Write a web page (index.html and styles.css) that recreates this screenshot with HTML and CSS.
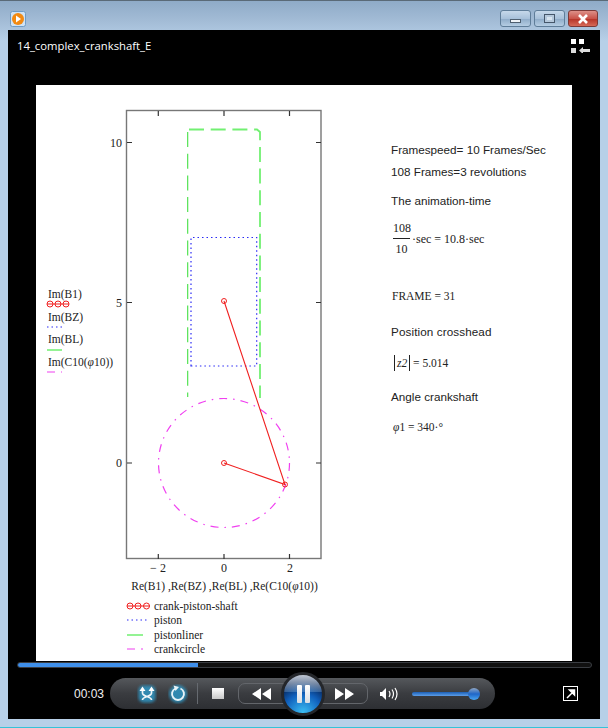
FILE: index.html
```html
<!DOCTYPE html>
<html lang="en">
<head>
<meta charset="utf-8">
<title>14_complex_crankshaft_E</title>
<link rel="stylesheet" href="styles.css">
</head>
<body>
<div class="window">
  <div class="titlebar">
    <svg class="appicon" width="16" height="16" viewBox="0 0 16 16">
      <rect x=".5" y=".5" width="15" height="15" rx="2" fill="#cfe3f5" stroke="#6f9cc6"/>
      <circle cx="8" cy="8" r="6" fill="#f28a12"/>
      <path d="M6 4.500 11 8 6 11.500Z" fill="#fff"/>
    </svg>
    <div class="winbtns">
      <div class="winbtn"><span class="glyph-min"></span></div>
      <div class="winbtn"><span class="glyph-max"></span></div>
      <div class="winbtn close">
        <svg width="12" height="10" viewBox="0 0 12 10"><path d="M2 1 10 9M10 1 2 9" stroke="#fff" stroke-width="2.600"/></svg>
      </div>
    </div>
  </div>
  <div class="player">
    <div class="header">
      <span class="filename">14_complex_crankshaft_E</span>
      <svg class="layout-icon" width="19" height="14" viewBox="0 0 19 14">
        <path d="M0 0h5v5H0zM8 0h5v5H8z" fill="#fff"/>
        <path d="M0 9h5v5H0z" fill="#ddd"/>
        <path d="M8 11.500l4-3.500v2h7v3h-7v2z" fill="#ddd"/>
      </svg>
    </div>
    <div class="stage">
      <svg class="plot" width="340" height="576" viewBox="36 85 340 576">
        <rect x="126.500" y="110.500" width="194.500" height="448" fill="none" stroke="#777" stroke-width="1.400"/>
        <g stroke="#333" stroke-width="1.200">
          <path d="M158.300 111v5M224 111v5M289.500 111v5M158.300 559v-5M224 559v-5M289.500 559v-5"/>
          <path d="M127 142.500h5M127 302.500h5M127 463h5M321 142.500h-5M321 302.500h-5M321 463h-5"/>
        </g>
        <path class="liner" d="M187.700 132V397"/>
        <path class="liner soft" d="M189 129.500H257L260 132V398"/>
        <path class="pist" d="M191 366V237.500H256.700V366Z"/>
        <ellipse class="crank" cx="224" cy="463" rx="65.500" ry="64.500"/>
        <path class="rod" d="M224 301 285 484.500 224 463"/>
        <g class="pin">
          <circle cx="224" cy="301" r="2.500"/>
          <circle cx="285" cy="484.500" r="2.500"/>
          <circle cx="224" cy="463" r="2.500"/>
        </g>
        <g class="axis">
          <text class="tick" x="122" y="147" text-anchor="end">10</text>
          <text class="tick" x="122" y="307" text-anchor="end">5</text>
          <text class="tick" x="122" y="467" text-anchor="end">0</text>
          <text class="tick" x="158" y="572" text-anchor="middle">− 2</text>
          <text class="tick" x="224" y="572" text-anchor="middle">0</text>
          <text class="tick" x="290" y="572" text-anchor="middle">2</text>
          <text x="224.500" y="590" text-anchor="middle">Re(B1) ,Re(BZ) ,Re(BL) ,Re(C10(<tspan font-style="italic">φ</tspan>10))</text>
          <text x="48" y="298">Im(B1)</text>
          <text x="48" y="321">Im(BZ)</text>
          <text x="48" y="343">Im(BL)</text>
          <text x="48" y="366">Im(C10(<tspan font-style="italic">φ</tspan>10))</text>
          <text x="154" y="610">crank-piston-shaft</text>
          <text x="154" y="624">piston</text>
          <text x="154" y="639">pistonliner</text>
          <text x="154" y="653">crankcircle</text>
        </g>
        <g class="pin">
          <circle cx="50" cy="304" r="3"/><circle cx="58" cy="304" r="3"/><circle cx="66" cy="304" r="3"/>
          <circle cx="130" cy="606" r="3"/><circle cx="138" cy="606" r="3"/><circle cx="146.500" cy="606" r="3"/>
        </g>
        <path class="rod" d="M47 304H69M127 606H150"/>
        <path class="pist" d="M47 327H65M127 620H147"/>
        <path class="liner legend" d="M47 350H62M127 635H143"/>
        <path class="crank legend" d="M47 372H62M127 649H148"/>
      </svg>
      <div class="notes">
        <p class="n1">Framespeed= 10 Frames/Sec</p>
        <p class="n2">108 Frames=3 revolutions</p>
        <p class="n3">The animation-time</p>
        <div class="math n4">
          <span class="frac"><span class="num">108</span><span class="den">10</span></span>
          <span>·sec = 10.8·sec</span>
        </div>
        <p class="math n5">FRAME = 31</p>
        <p class="n6">Position crosshead</p>
        <p class="math n7"><span class="abs">z2</span> = 5.014</p>
        <p class="n8">Angle crankshaft</p>
        <p class="math n9"><i>φ</i>1 = 340·°</p>
      </div>
    </div>
    <div class="seek"><div class="seek-fill"></div></div>
    <div class="controls">
      <span class="time">00:03</span>
      <div class="pill">
        <svg class="shuffle" width="20" height="20" viewBox="0 0 20 20">
          <rect class="glow" x="1.500" y="1.500" width="17" height="17" rx="5"/>
          <path d="M5.500 7v2c0 4 9 3 9 7M14.500 7v2c0 4-9 3-9 7" fill="none" stroke="#eef4f8" stroke-width="1.700"/>
          <path d="M5.500 2.500 2.500 7h6ZM14.500 2.500 11.500 7h6Z" fill="#fff"/>
        </svg>
        <svg class="repeat" width="20" height="20" viewBox="0 0 20 20">
          <circle class="glow" cx="10" cy="10" r="9"/>
          <path d="M7.500 4.500A6 6 0 1 0 12.500 4.500" fill="none" stroke="#e8f3f8" stroke-width="1.900"/>
          <path d="M5.500 1.500l5.500 1.500 -3.500 4z" fill="#e8f3f8"/>
        </svg>
        <span class="divider"></span>
        <span class="stop"></span>
        <div class="seg prev">
          <svg width="19" height="12" viewBox="0 0 19 12"><path d="M9 0v12L0 6ZM19 0v12L10 6Z" fill="#fff"/></svg>
        </div>
        <div class="pause">
          <span class="bar"></span><span class="bar"></span>
        </div>
        <div class="seg next">
          <svg width="19" height="12" viewBox="0 0 19 12"><path d="M0 0v12L9 6ZM10 0v12L19 6Z" fill="#fff"/></svg>
        </div>
        <svg class="volume" width="18" height="14" viewBox="0 0 18 14">
          <path d="M0 5h2l4-4v12l-4-4H0z" fill="#fff"/>
          <path d="M9 4q2 3 0 6M12 2.500q3 4.500 0 9M15 1q4 6 0 12" fill="none" stroke="#fff" stroke-width="1.200"/>
        </svg>
        <div class="slider"><span class="thumb"></span></div>
      </div>
      <svg class="fullscreen" width="15" height="15" viewBox="0 0 15 15">
        <rect x=".5" y=".5" width="14" height="14" fill="#000" stroke="#fff"/>
        <path d="M4 12 10 6M6.500 4H11.500V9Z" fill="#fff" stroke="#fff" stroke-width="1.500"/>
      </svg>
    </div>
  </div>
</div>
</body>
</html>
```

FILE: styles.css
```css
* { box-sizing: border-box; }
html, body { margin: 0; padding: 0; background: #b6cfe6; }
.window {
  width: 608px;
  height: 728px;
  display: flex;
  flex-direction: column;
  padding: 0 8px 8px;
  background: linear-gradient(#8fabc8 0, #a3bcd6 20px, #b7d0e8 40px);
  border-top: 1px solid #5a6a78;
  border-bottom: 1px solid #35c3d8;
}
.titlebar {
  height: 29px;
  flex: none;
  display: flex;
  align-items: flex-start;
  justify-content: space-between;
  padding-top: 9px;
}
.appicon { margin-left: 2px; margin-top: 1px; }
.winbtns { display: flex; gap: 3px; margin-right: 2px; }
.winbtn {
  width: 31px;
  height: 17px;
  border: 1px solid #5f7d99;
  border-radius: 3px;
  background: linear-gradient(#c6d8ea, #a8c1da 50%, #8eabc8 52%, #b5cde3);
  display: flex;
  align-items: center;
  justify-content: center;
}
.winbtn.close {
  width: 30px;
  background: linear-gradient(#dd9088, #c9544a 50%, #b43226 52%, #d66a58);
  border-color: #7c3a38;
}
.glyph-min { width: 11px; height: 4px; margin-top: 5px; background: #eef3f8; border: 1px solid #4e5f70; }
.glyph-max { width: 11px; height: 9px; background: #d8e4ef; border: 1px solid #45566a; box-shadow: inset 0 0 0 2px #b5c8db; }
.player {
  flex: 1;
  min-height: 0;
  background: #000;
  display: flex;
  flex-direction: column;
}
.header {
  height: 55px;
  flex: none;
  display: flex;
  align-items: flex-start;
  justify-content: space-between;
  padding: 9px 10px 0 9px;
}
.filename { font: 11.300px/14px "Open Sans", sans-serif; color: #fff; }
.stage {
  width: 536px;
  height: 576px;
  flex: none;
  margin-left: 28px;
  background: #fff;
  display: flex;
}
.plot { display: block; flex: none; }
.plot text { font: 11.500px "Liberation Serif", serif; fill: #222; }
.plot text.tick { font-size: 12px; }
.liner { fill: none; stroke: #44e044; stroke-width: 1.100; stroke-dasharray: 15 6.700; }
.liner.soft { stroke: #72f072; stroke-width: 1.800; }
.liner.legend { stroke: #72f072; stroke-width: 1.500; stroke-dasharray: none; }
.pist { fill: none; stroke: #2a2af5; stroke-width: 1.200; stroke-dasharray: 1.500 3; }
.crank { fill: none; stroke: #f040f0; stroke-width: 1.200; stroke-dasharray: 8 6 1.500 6; }
.crank.legend { stroke-dasharray: 8 6 2 6; }
.rod { fill: none; stroke: #f02020; stroke-width: 1.100; }
.pin circle { fill: none; stroke: #f02020; stroke-width: 1; }
.notes {
  flex: none;
  margin-left: 15px;
  padding-top: 58px;
  color: #222;
  font: 11.700px/14px "Liberation Sans", sans-serif;
}
.notes p { margin: 0; }
.notes .math { font: 11.500px/14px "Liberation Serif", serif; }
.notes .n2 { margin-top: 8px; }
.notes .n3 { margin-top: 15px; }
.notes .n4 { margin-top: 13px; display: flex; align-items: center; gap: 2px; font-size: 12px; margin-left: 2px; }
.frac { display: inline-flex; flex-direction: column; align-items: center; width: 17px; }
.num { border-bottom: 1px solid #222; width: 100%; text-align: center; padding-bottom: 3px; }
.den { padding-top: 3px; }
.notes .n5 { margin-top: 33px; margin-left: 1px; }
.notes .n6 { margin-top: 22px; letter-spacing: .1px; }
.notes .n7 { margin-top: 16px; margin-left: 3px; }
.abs { border-left: 1px solid #222; border-right: 1px solid #222; padding: 0 2px; display: inline-block; line-height: 16px; font-style: italic; }
.notes .n8 { margin-top: 19px; }
.notes .n9 { margin-top: 16px; margin-left: 2px; }
.seek {
  height: 6px;
  flex: none;
  margin: 1px 8px 0 9px;
  border: 1px solid #3a3d42;
  border-radius: 3px;
  background: #111;
  overflow: hidden;
}
.seek-fill { width: 180px; height: 100%; background: #3f8fea; }
.controls {
  flex: 1;
  display: flex;
  align-items: center;
  padding: 0 21px 0 66px;
}
.time { font: 12px "Liberation Sans", sans-serif; color: #f0f0f0; width: 36px; }
.pill {
  width: 385px;
  height: 31px;
  border-radius: 16px;
  background: linear-gradient(#55585c, #3a3c40 50%, #2d2f33);
  display: flex;
  align-items: center;
  padding-left: 27px;
}
.glow { fill: #2f9ccc; opacity: .8; filter: blur(1.500px); }
.repeat { margin-left: 11px; }
.divider { width: 1px; height: 21px; background: #666a70; margin-left: 9px; }
.stop {
  width: 12px;
  height: 11px;
  background: linear-gradient(#fff, #c8c8c8);
  margin-left: 14px;
}
.seg {
  width: 46px;
  height: 21px;
  border: 1px solid #63666b;
  display: flex;
  align-items: center;
}
.prev { margin-left: 14px; border-radius: 7px 0 0 7px; padding-left: 13px; }
.next { border-radius: 0 7px 7px 0; padding-left: 12px; }
.pause {
  width: 44px;
  height: 44px;
  flex: none;
  margin: 0 -3px;
  border-radius: 50%;
  border: 3px solid #24262a;
  background:
    linear-gradient(rgba(255,255,255,.75), rgba(180,220,250,.25) 44%, transparent 45%),
    radial-gradient(circle at 50% 100%, #3cc0f5, #1060bc 45%, #06204f 75%);
  display: flex;
  align-items: center;
  justify-content: center;
  gap: 3px;
  position: relative;
}
.bar { width: 5px; height: 18px; background: linear-gradient(#fff, #d8dde4); border-radius: 1px; }
.volume { margin-left: 12px; }
.slider {
  width: 67px;
  height: 4px;
  margin-left: 14px;
  border-radius: 2px;
  background: linear-gradient(#1c5fb4, #5d9ee8);
  position: relative;
}
.thumb {
  position: absolute;
  right: -1px;
  top: -4px;
  width: 12px;
  height: 12px;
  border-radius: 50%;
  background: linear-gradient(#8fa6c4, #1f66c8 50%, #49a6f2);
}
.fullscreen { margin-left: 68px; }
```
